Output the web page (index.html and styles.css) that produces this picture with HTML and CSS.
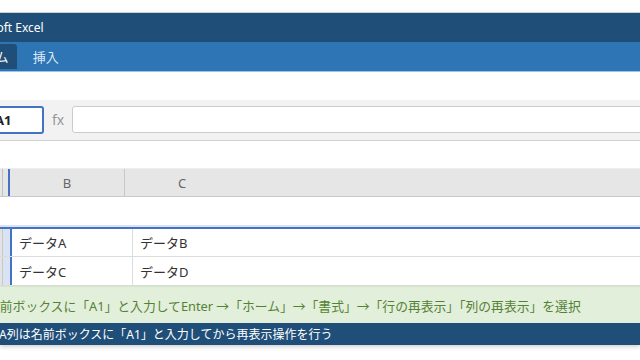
FILE: index.html
```html
<html lang="ja">
<head>
  <meta charset="UTF-8">
  <meta name="viewport" content="width=device-width, initial-scale=1.0">
  <title>Excel 再表示</title>
  <link rel="stylesheet" href="styles.css">
</head>
<body>
  <div class="window">
    <div class="title-bar">
      <span class="title">Microsoft Excel</span>
    </div>

    <div class="tab-bar">
      <div class="tabs">
        <div class="tab active">ホーム</div>
        <div class="tab">挿入</div>
      </div>
    </div>

    <div class="ribbon"></div>

    <div class="formula-bar">
      <div class="name-box">A1</div>
      <div class="fx">fx</div>
      <div class="formula-input"></div>
    </div>

    <div class="gap"></div>

    <div class="col-header">
      <div class="corner"></div>
      <div class="hidden-col"></div>
      <div class="col col-b">B</div>
      <div class="col col-c">C</div>
    </div>

    <div class="hidden-row"></div>

    <div class="grid">
      <div class="row">
        <div class="row-head"></div>
        <div class="row-hidden-col"></div>
        <div class="cell cell-b">データA</div>
        <div class="cell cell-c">データB</div>
      </div>
      <div class="row">
        <div class="row-head"></div>
        <div class="row-hidden-col"></div>
        <div class="cell cell-b">データC</div>
        <div class="cell cell-c">データD</div>
      </div>
    </div>

    <div class="answer">
      <span class="answer-text">名前ボックスに「A1」と入力してEnter →「ホーム」→「書式」→「行の再表示」「列の再表示」を選択</span>
    </div>

    <div class="status">
      <span class="status-text">A列は名前ボックスに「A1」と入力してから再表示操作を行う</span>
    </div>
  </div>
</body>
</html>
```

FILE: styles.css
```css
* {
  box-sizing: border-box;
  margin: 0;
  padding: 0;
}

body {
  font-family: "Noto Sans", "Noto Sans CJK JP", sans-serif;
  background: #fff;
  width: 640px;
  height: 360px;
  overflow: hidden;
}

.window {
  margin-top: 12px;
  border-top: 1px solid #cfcfcf;
  box-shadow: 0 2px 4px rgba(0, 0, 0, 0.18);
  overflow: hidden;
}

/* title + tabs */
.title-bar {
  height: 29px;
  background: #1f4e79;
  color: #fff;
  display: flex;
  align-items: center;
  white-space: nowrap;
}

.title {
  font-size: 12px;
  margin-left: -41px;
}

.tab-bar {
  height: 30px;
  background: #2e75b6;
  border-bottom: 1px solid #9dc3e6;
  display: flex;
  align-items: flex-end;
}

.tabs {
  display: flex;
  gap: 8px;
  margin-left: -38px;
  margin-bottom: 2px;
}

.tab {
  height: 25px;
  padding: 0 8px;
  font-size: 13px;
  color: #dde9f5;
  display: flex;
  align-items: center;
  border-radius: 3px 3px 0 0;
  white-space: nowrap;
}

.tab.active {
  background: #1f4e79;
  color: #fff;
}

.ribbon {
  height: 28px;
  background: #fff;
}

/* formula bar */
.formula-bar {
  height: 41px;
  background: #f2f2f2;
  border-bottom: 1px solid #d0d0d0;
  display: flex;
  align-items: center;
  padding-bottom: 1px;
}

.name-box {
  width: 60px;
  height: 28px;
  margin-left: -16px;
  padding-left: 9px;
  background: #fff;
  border: 2px solid #4472c4;
  border-radius: 3px;
  font-size: 13px;
  font-weight: bold;
  color: #222;
  display: flex;
  align-items: center;
}

.fx {
  width: 28px;
  text-align: center;
  font-size: 14px;
  color: #999;
}

.formula-input {
  flex: 1;
  height: 27px;
  margin-right: -10px;
  background: #fff;
  border: 1px solid #ccc;
  border-radius: 3px;
}

.gap {
  height: 27px;
}

/* column header */
.col-header {
  height: 29px;
  background: #e6e6e6;
  border-top: 1px solid #eeeeee;
  border-bottom: 1px solid #c8c8c8;
  display: flex;
}

.corner {
  width: 3px;
  border-right: 1px solid #c0c0c0;
}

.hidden-col {
  width: 7px;
  border-right: 2px solid #4472c4;
}

.col {
  font-size: 13px;
  color: #666;
  display: flex;
  align-items: center;
  justify-content: center;
}

.col-b {
  width: 115px;
  border-right: 1px solid #c8c8c8;
}

.col-c {
  width: 114px;
}

.hidden-row {
  height: 32px;
  border-bottom: 2px solid #4472c4;
  background: linear-gradient(#fff 0, #fff 28px, #dae3f3 28px);
}

/* rows */
.row {
  height: 29px;
  display: flex;
  border-bottom: 1px solid #dcdcdc;
}

.row:first-child {
  height: 28px;
}

.row-head {
  width: 3px;
  background: #e3e3e3;
  border-right: 1px solid #c8c8c8;
}

.row-hidden-col {
  width: 9px;
  background: #dae3f3;
  border-right: 2px solid #4472c4;
}

.cell {
  font-size: 13px;
  color: #333;
  padding-left: 7px;
  display: flex;
  align-items: center;
  white-space: nowrap;
}

.cell-b {
  width: 121px;
  border-right: 1px solid #dcdcdc;
}

.cell-c {
  flex: 1;
}

/* notes */
.answer {
  height: 37px;
  background: #e2efda;
  border-top: 1px solid #d4e6c9;
  display: flex;
  align-items: center;
  white-space: nowrap;
}

.answer-text {
  font-size: 12.8px;
  color: #548235;
  margin-left: -13px;
}

.status {
  height: 22px;
  background: #1f4e79;
  display: flex;
  align-items: center;
  white-space: nowrap;
}

.status-text {
  font-size: 12px;
  color: #fff;
  margin-left: -1px;
}
```
